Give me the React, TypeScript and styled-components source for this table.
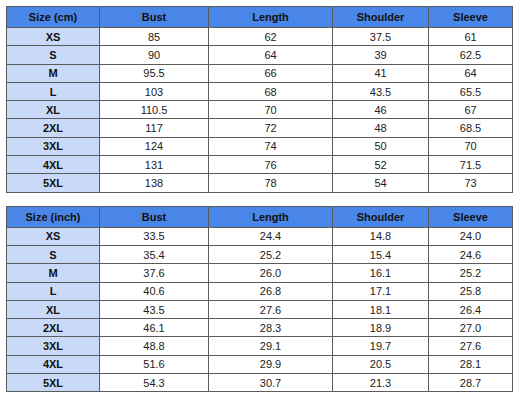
import styled, { createGlobalStyle } from "styled-components";

const GlobalStyle = createGlobalStyle`
  body {
    margin: 0;
    background: #ffffff;
    font-family: "Liberation Sans", Arial, sans-serif;
  }
`;

const Page = styled.div`
  display: flex;
  flex-direction: column;
  gap: 13px;
  padding: 6px 8px 0 6px;
  width: 506px;
`;

const Table = styled.table`
  width: 506px;
  border-collapse: collapse;
  table-layout: fixed;
  font-size: 11px;
  color: #111;
`;

const HeadRow = styled.tr`
  height: 21px;
`;

const Row = styled.tr`
  height: 18.3px;
`;

const HeadCell = styled.th`
  background: #4a86e8;
  border: 1px solid #5b5b5b;
  font-weight: bold;
  text-align: center;
  padding: 0;
  color: #111;
`;

const SizeCell = styled.td`
  background: #c9daf8;
  border: 1px solid #5b5b5b;
  font-weight: bold;
  text-align: center;
  padding: 0;
`;

const Cell = styled.td`
  background: #ffffff;
  border: 1px solid #5b5b5b;
  text-align: center;
  padding: 0;
  color: #222;
`;

const widths = [93, 109, 124, 96, 84];

const cmRows = [
  ["XS", "85", "62", "37.5", "61"],
  ["S", "90", "64", "39", "62.5"],
  ["M", "95.5", "66", "41", "64"],
  ["L", "103", "68", "43.5", "65.5"],
  ["XL", "110.5", "70", "46", "67"],
  ["2XL", "117", "72", "48", "68.5"],
  ["3XL", "124", "74", "50", "70"],
  ["4XL", "131", "76", "52", "71.5"],
  ["5XL", "138", "78", "54", "73"],
];

const inchRows = [
  ["XS", "33.5", "24.4", "14.8", "24.0"],
  ["S", "35.4", "25.2", "15.4", "24.6"],
  ["M", "37.6", "26.0", "16.1", "25.2"],
  ["L", "40.6", "26.8", "17.1", "25.8"],
  ["XL", "43.5", "27.6", "18.1", "26.4"],
  ["2XL", "46.1", "28.3", "18.9", "27.0"],
  ["3XL", "48.8", "29.1", "19.7", "27.6"],
  ["4XL", "51.6", "29.9", "20.5", "28.1"],
  ["5XL", "54.3", "30.7", "21.3", "28.7"],
];

const SizeTable = ({ unit, rows }: { unit: string; rows: string[][] }) => (
  <Table>
    <colgroup>
      {widths.map((w, i) => (
        <col key={i} style={{ width: w }} />
      ))}
    </colgroup>
    <thead>
      <HeadRow>
        <HeadCell>Size ({unit})</HeadCell>
        <HeadCell>Bust</HeadCell>
        <HeadCell>Length</HeadCell>
        <HeadCell>Shoulder</HeadCell>
        <HeadCell>Sleeve</HeadCell>
      </HeadRow>
    </thead>
    <tbody>
      {rows.map((r) => (
        <Row key={r[0]}>
          <SizeCell>{r[0]}</SizeCell>
          {r.slice(1).map((v, i) => (
            <Cell key={i}>{v}</Cell>
          ))}
        </Row>
      ))}
    </tbody>
  </Table>
);

export default function App() {
  return (
    <>
      <GlobalStyle />
      <Page>
        <SizeTable unit="cm" rows={cmRows} />
        <SizeTable unit="inch" rows={inchRows} />
      </Page>
    </>
  );
}
